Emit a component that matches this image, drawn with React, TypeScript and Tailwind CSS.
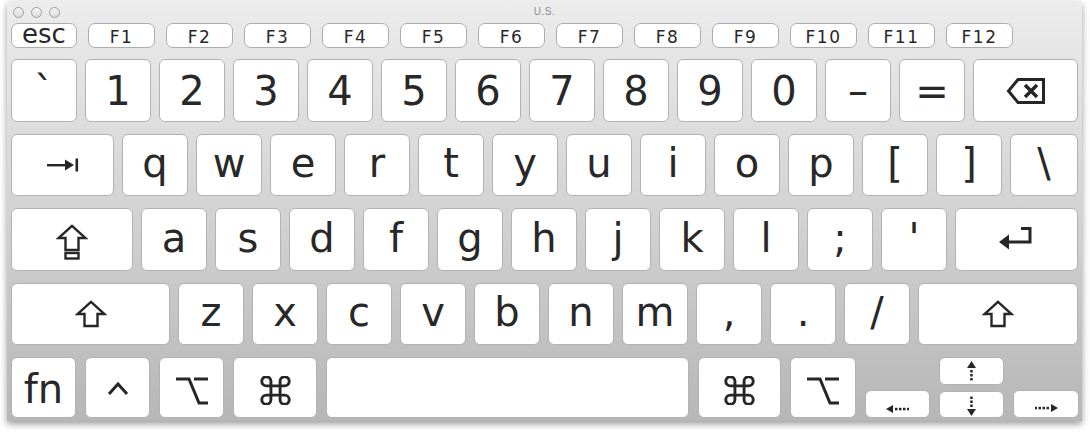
import type { ReactNode } from "react";
import clsx from "clsx";

const keyFont = { fontFamily: '"DejaVu Sans", "Liberation Sans", sans-serif' };

function Key({ className, children }: { className?: string; children?: ReactNode }) {
  return (
    <div
      className={clsx(
        "flex shrink-0 items-center justify-center rounded-[6px] border border-[#b2b2b2] bg-white text-[40px] leading-none text-[#282828]",
        className
      )}
    >
      {children}
    </div>
  );
}

function FKey({ label, className }: { label: string; className?: string }) {
  return (
    <div
      className={clsx(
        "flex h-[25px] shrink-0 items-center justify-center rounded-[7px] border border-[#adadad] bg-white pt-[4px] text-[17px] leading-none tracking-[1.5px] text-[#282828]",
        className
      )}
    >
      {label}
    </div>
  );
}

const BackspaceIcon = () => (
  <svg width="40" height="28" viewBox="0 0 40 28" fill="none" stroke="#262626" strokeWidth="3">
    <path d="M12 2.5H37.5V25.5H12L2.5 14Z" strokeLinejoin="miter" />
    <path d="M19 8L31 20M31 8L19 20" strokeWidth="3.5" />
  </svg>
);

const TabIcon = () => (
  <svg width="32" height="14" viewBox="0 0 32 14" fill="#262626">
    <rect x="0" y="6" width="20" height="2.4" />
    <polygon points="18,1.5 27,7 18,12.5" />
    <rect x="28.5" y="0.5" width="2.6" height="13" />
  </svg>
);

const ShiftIcon = ({ caps }: { caps?: boolean }) => (
  <svg width="32" height={caps ? 36 : 28} viewBox={caps ? "0 0 32 36" : "0 0 32 28"} fill="none" stroke="#262626" strokeWidth="2.4">
    <path d="M16 1.8L29.5 14H22.5V26H9.5V14H2.5Z" strokeLinejoin="miter" />
    {caps ? <rect x="9.5" y="29" width="13" height="5.5" /> : null}
  </svg>
);

const ReturnIcon = () => (
  <svg width="35" height="24" viewBox="0 0 35 24" fill="#262626" stroke="#262626">
    <path d="M22 2.5H31V16H8" fill="none" strokeWidth="3" />
    <polygon points="0,16 10,8.5 10,23.5" stroke="none" />
  </svg>
);

const ControlIcon = () => (
  <svg width="22" height="16" viewBox="0 0 22 16" fill="none" stroke="#262626" strokeWidth="3">
    <path d="M2 14L11 4L20 14" />
  </svg>
);

const OptionIcon = () => (
  <svg width="32" height="28" viewBox="0 0 32 28" fill="none" stroke="#262626" strokeWidth="3">
    <path d="M0 2H13L23 26H32M18 2H32" />
  </svg>
);

const CommandIcon = () => (
  <svg width="31" height="29" viewBox="2.5 2.5 19 19" fill="none" stroke="#262626" strokeWidth="1.9">
    <path d="M15 6v12a3 3 0 1 0 3-3H6a3 3 0 1 0 3 3V6a3 3 0 1 0-3 3h12a3 3 0 1 0-3-3" />
  </svg>
);

// dotted arrows on the cursor keys
const DotArrow = ({ dir }: { dir: "left" | "right" | "up" | "down" }) => {
  const horizontal = dir === "left" || dir === "right";
  const flip = dir === "right" || dir === "down";
  return horizontal ? (
    <svg width="23" height="8" viewBox="0 0 23 8" fill="#262626" style={flip ? { transform: "scaleX(-1)" } : undefined}>
      <polygon points="0,4 7,0 7,8" />
      <rect x="9" y="2.8" width="2.5" height="2.5" />
      <rect x="13" y="2.8" width="2.5" height="2.5" />
      <rect x="17" y="2.8" width="2.5" height="2.5" />
      <rect x="21" y="2.8" width="2" height="2.5" />
    </svg>
  ) : (
    <svg width="9" height="21" viewBox="0 0 9 21" fill="#262626" style={flip ? { transform: "scaleY(-1)" } : undefined}>
      <polygon points="4.5,0 9,7 0,7" />
      <rect x="3.2" y="9" width="2.5" height="2.5" />
      <rect x="3.2" y="13" width="2.5" height="2.5" />
      <rect x="3.2" y="17" width="2.5" height="2.5" />
    </svg>
  );
};

const fnKeys = ["F1", "F2", "F3", "F4", "F5", "F6", "F7", "F8", "F9", "F10", "F11", "F12"];
const numberKeys = ["`", "1", "2", "3", "4", "5", "6", "7", "8", "9", "0", "–", "="];
const topKeys = ["q", "w", "e", "r", "t", "y", "u", "i", "o", "p", "[", "]"];
const homeKeys = ["a", "s", "d", "f", "g", "h", "j", "k", "l", ";", "'"];
const bottomKeys = ["z", "x", "c", "v", "b", "n", "m", ",", ".", "/"];

export default function App() {
  return (
    <div className="min-h-screen bg-white pt-[1px]" style={keyFont}>
      <div className="ml-[7px] flex h-[420px] w-[1075px] flex-col rounded-t-[4px] bg-gradient-to-b from-[#ececec] via-[#d3d3d3] to-[#b6b6b6] px-[4px] shadow-[0_3px_7px_rgba(0,0,0,0.4)]">
        {/* title bar */}
        <div className="grid h-[22px] shrink-0 grid-cols-[1fr_auto_1fr] items-center">
          <div className="flex gap-[7px] pl-[2px]">
            <span className="h-[11px] w-[11px] rounded-full border border-[#9d9d9d] bg-gradient-to-b from-[#f4f4f4] to-[#dcdcdc]" />
            <span className="h-[11px] w-[11px] rounded-full border border-[#9d9d9d] bg-gradient-to-b from-[#f4f4f4] to-[#dcdcdc]" />
            <span className="h-[11px] w-[11px] rounded-full border border-[#9d9d9d] bg-gradient-to-b from-[#f4f4f4] to-[#dcdcdc]" />
          </div>
          <div className="text-[10px] leading-none tracking-[0.5px] text-[#8c8c8c]" style={{ fontFamily: '"Liberation Sans", sans-serif' }}>
            U.S.
          </div>
          <div />
        </div>

        {/* function row */}
        <div className="flex shrink-0 gap-[11px]">
          <div className="flex h-[25px] w-[66px] shrink-0 items-center justify-center rounded-[7px] border border-[#adadad] bg-white pb-[3px] text-[26px] leading-none text-[#282828]">
            esc
          </div>
          {fnKeys.map((k) => (
            <FKey key={k} label={k} className="w-[67px]" />
          ))}
        </div>

        <div className="mt-[11px] flex flex-col gap-[12px]">
          <div className="flex h-[63px] gap-[8px]">
            {numberKeys.map((k) => (
              <Key key={k} className="w-[66px]">
                {k}
              </Key>
            ))}
            <Key className="flex-1">
              <BackspaceIcon />
            </Key>
          </div>

          <div className="flex h-[62px] gap-[8px]">
            <Key className="w-[103px]">
              <TabIcon />
            </Key>
            {topKeys.map((k) => (
              <Key key={k} className="w-[66px] pb-[4px]">
                {k}
              </Key>
            ))}
            <Key className="flex-1 pb-[4px]">\</Key>
          </div>

          <div className="flex h-[63px] gap-[8px]">
            <Key className="w-[122px] pt-[4px]">
              <ShiftIcon caps />
            </Key>
            {homeKeys.map((k) => (
              <Key key={k} className="w-[66px] pb-[4px]">
                {k}
              </Key>
            ))}
            <Key className="flex-1 pb-[4px]">
              <ReturnIcon />
            </Key>
          </div>

          <div className="flex h-[62px] gap-[8px]">
            <Key className="w-[159px]">
              <ShiftIcon />
            </Key>
            {bottomKeys.map((k) => (
              <Key key={k} className="w-[66px] pb-[4px]">
                {k}
              </Key>
            ))}
            <Key className="flex-1">
              <ShiftIcon />
            </Key>
          </div>

          <div className="flex h-[61px] gap-[9px]">
            <Key className="w-[65px] pt-[2px]">fn</Key>
            <Key className="w-[65px]">
              <ControlIcon />
            </Key>
            <Key className="w-[65px] pt-[6px]">
              <OptionIcon />
            </Key>
            <Key className="w-[84px] pt-[6px]">
              <CommandIcon />
            </Key>
            <Key className="w-[363px]" />
            <Key className="w-[83px] pt-[6px]">
              <CommandIcon />
            </Key>
            <Key className="w-[66px] pt-[6px]">
              <OptionIcon />
            </Key>
            <div className="flex flex-col justify-end">
              <Key className="h-[28px] w-[65px] items-end pb-[4px]">
                <DotArrow dir="left" />
              </Key>
            </div>
            <div className="flex flex-col gap-[6px]">
              <Key className="h-[28px] w-[65px]">
                <DotArrow dir="up" />
              </Key>
              <Key className="h-[27px] w-[65px] items-end pb-[1px]">
                <DotArrow dir="down" />
              </Key>
            </div>
            <div className="flex flex-col justify-end">
              <Key className="h-[28px] w-[66px] items-end pb-[5px]">
                <DotArrow dir="right" />
              </Key>
            </div>
          </div>
        </div>
      </div>
    </div>
  );
}
